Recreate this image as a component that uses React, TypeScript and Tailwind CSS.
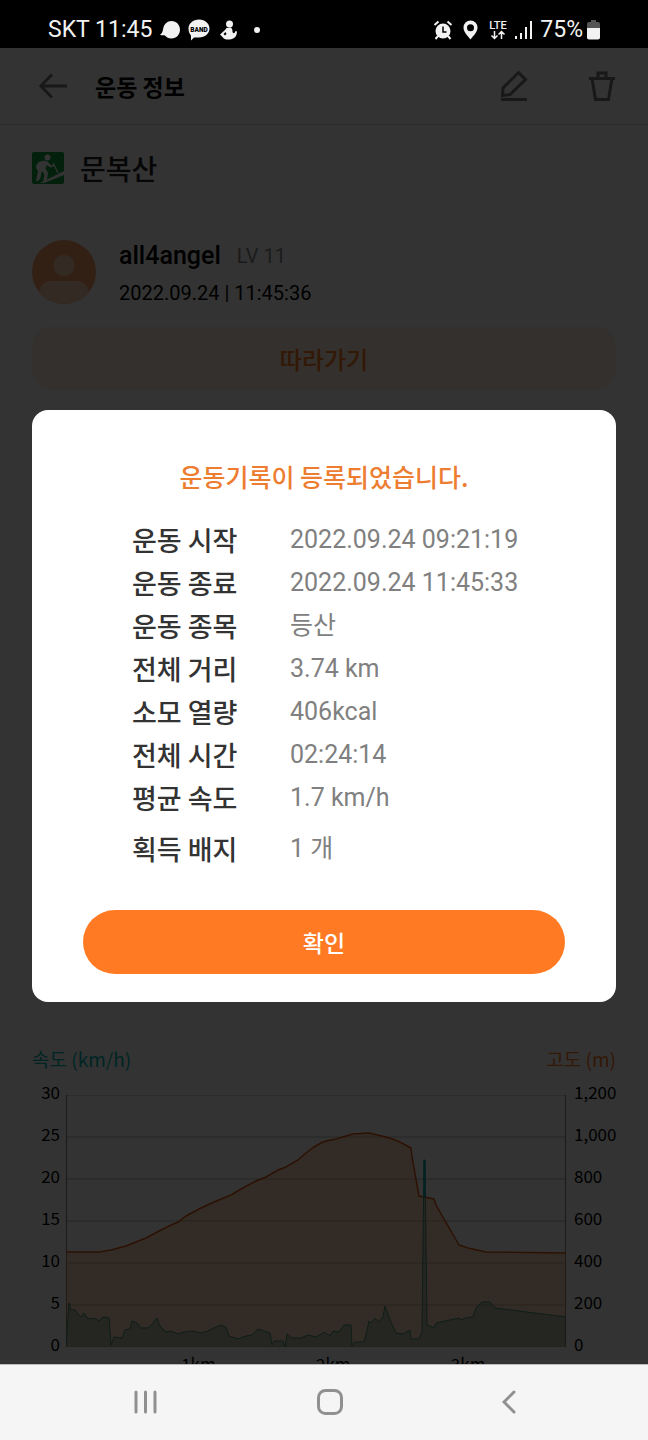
import React from 'react';

type RecordItem = {
  label: string;
  value: string;
};

const records: RecordItem[] = [
  { label: '운동 시작', value: '2022.09.24 09:21:19' },
  { label: '운동 종료', value: '2022.09.24 11:45:33' },
  { label: '운동 종목', value: '등산' },
  { label: '전체 거리', value: '3.74 km' },
  { label: '소모 열량', value: '406kcal' },
  { label: '전체 시간', value: '02:24:14' },
  { label: '평균 속도', value: '1.7 km/h' },
  { label: '획득 배지', value: '1 개' },
];

const speedTicks = ['30', '25', '20', '15', '10', '5', '0'];
const altitudeTicks = ['1,200', '1,000', '800', '600', '400', '200', '0'];
const distanceTicks = ['1km', '2km', '3km'];

const altitudeLine =
  '0,157 33,157 45,155 60,151 80,143 95,135 105,130 112,127 120,121 135,113 148,107 165,100 175,94 190,86 200,82 212,75 220,72 232,65 240,58 248,52 255,48 260,46 270,44 287,39 303,38 320,42 332,46 345,53 346,62 353,101 368,104 370,110 393,150 402,153 420,157 500,158';
const speedLine =
  '0,252 3,208 5,215 9,215 12,219 15,222 18,218 21,223 25,224 29,223 33,226 37,222 43,223 45,250 48,242 56,243 59,235 64,234 66,226 71,228 75,233 82,233 88,227 91,223 94,231 100,237 105,236 112,239 118,237 127,236 135,238 142,236 150,232 155,230 160,232 163,241 172,244 180,241 186,240 192,234 198,236 204,238 206,250 208,246 217,246 219,252 221,239 226,243 235,243 242,240 250,242 259,237 264,241 267,236 273,237 278,230 285,230 286,251 289,247 298,247 300,240 303,226 305,228 309,223 313,227 317,222 319,211 324,225 330,238 337,239 344,235 345,244 353,244 356,237 358,65 359,65 361,230 368,233 370,228 393,223 395,225 399,223 407,222 410,213 416,207 424,207 429,213 500,222';

const BackArrow: React.FC = () => (
  <svg width="28" height="24" viewBox="0 0 28 24" fill="none" stroke="currentColor" strokeWidth="3">
    <path d="M12 1.5 1.8 12 12 22.5M2 12h25" strokeLinecap="round" strokeLinejoin="round" />
  </svg>
);

const StatusBar: React.FC = () => (
  <div className="h-12 shrink-0 bg-black text-[#f2f2f2] flex items-center justify-between px-12 pt-3 font-['Roboto',sans-serif] text-[23px]">
    <div className="flex items-center gap-2">
      <span>SKT 11:45</span>
      <svg width="20" height="18" viewBox="0 0 20 18" fill="currentColor">
        <path d="M11.5 0C16.5 0 20 4 20 8.7S16.5 17.5 11.5 17.5C8 17.5 6 15.5 4.5 14.2 3 14.2 1.5 14.5 0 13.7 2.5 12.3 2.7 10 3.2 7.5 4 3.2 7.2 0 11.5 0Z" />
      </svg>
      <svg width="22" height="22" viewBox="0 0 22 22">
        <path
          d="M11 .5c6 0 10.5 4 10.5 9s-4.5 9-10.5 9c-1.8 0-3.5-.3-5 .1L3 21.5v-5C1.3 14.5.5 12 .5 9.5c0-5 4.5-9 10.5-9Z"
          fill="currentColor"
        />
        <text x="11" y="12.5" textAnchor="middle" fontSize="6.5" fontWeight="900" fontFamily="Roboto" fill="#000">
          BAND
        </text>
      </svg>
      <svg className="ml-0.5" width="18" height="20" viewBox="0 0 18 20" fill="currentColor">
        <circle cx="9.5" cy="4" r="3.5" />
        <path d="M6.5 8 11 7.5c1.5 1.5 1.5 3 1.5 4.5 1 2 2 1.5 3-1l1.5.5c0 4-2 6.5-5 7.5-4 1.2-8 .5-9-1.5L0 14.5 5 10Zm-1 4-2 2 1.5 1.5 1.5-1.5Z" />
      </svg>
      <span className="ml-2 size-1.5 rounded-full bg-current" />
    </div>
    <div className="flex items-center gap-1.5">
      <svg width="20" height="20" viewBox="0 0 20 20">
        <circle cx="10" cy="11" r="7.5" fill="currentColor" />
        <path d="M1.5 5 5.5 1.5M18.5 5l-4-3.5" stroke="currentColor" strokeWidth="2" />
        <path d="m5 16-2.5 3M15 16l2.5 3" stroke="currentColor" strokeWidth="2" />
        <path d="M10 6.5V12h3.5" stroke="#000" strokeWidth="1.5" fill="none" />
      </svg>
      <svg className="mx-1" width="15" height="20" viewBox="0 0 15 20" fill="currentColor" fillRule="evenodd">
        <path d="M7.5.5a7 7 0 0 1 7 7c0 4.5-4 8-7 12-3-4-7-7.5-7-12a7 7 0 0 1 7-7Zm0 3.7a3.5 3.5 0 1 0 0 7 3.5 3.5 0 0 0 0-7Z" />
      </svg>
      <svg width="20" height="22" viewBox="0 0 20 22">
        <text x="10" y="10" textAnchor="middle" fontSize="11" fontWeight="500" fontFamily="Roboto" fill="currentColor">
          LTE
        </text>
        <path d="M6.5 12v7M3.5 16.5l3 3 3-3M13.5 20v-7M10.5 15.5l3-3 3 3" stroke="currentColor" strokeWidth="1.5" fill="none" />
      </svg>
      <svg className="mr-0.5" width="18" height="18" viewBox="0 0 18 18" stroke="currentColor" strokeWidth="2">
        <path d="M2 18v-3M7 18v-6M12 18V6M17 18V0" />
      </svg>
      <div className="flex items-center gap-1">
        <span>75%</span>
        <svg width="13" height="20" viewBox="0 0 13 20">
          <path d="M4 0h5v2h2a2 2 0 0 1 2 2v4H0V4a2 2 0 0 1 2-2h2Z" fill="#555" />
          <path d="M0 8h13v9.5a2 2 0 0 1-2 2H2a2 2 0 0 1-2-2Z" fill="currentColor" />
        </svg>
      </div>
    </div>
  </div>
);

const Header: React.FC = () => (
  <header className="h-[77px] border-b border-gray-300 flex items-center pl-[39px] pr-8 text-[#777]">
    <button type="button" aria-label="뒤로">
      <BackArrow />
    </button>
    <h1 className="ml-7 flex-1 text-[23px] font-bold text-black">운동 정보</h1>
    <button type="button" aria-label="수정">
      <svg width="28" height="32" viewBox="0 0 28 32" fill="none" stroke="currentColor" strokeWidth="3">
        <path d="M2.5 25.5 3 18 18.5 2.5l7 7L10 24.5Z" />
        <path d="M1 29.5h26" />
      </svg>
    </button>
    <button type="button" aria-label="삭제" className="ml-[60px]">
      <svg width="28" height="32" viewBox="0 0 28 32" fill="none" stroke="currentColor" strokeWidth="3">
        <path d="M1 8.5h26M10 8V3h8v5M4 8.5l3.5 21h13L24 8.5" />
      </svg>
    </button>
  </header>
);

const Profile: React.FC = () => (
  <section className="px-8">
    <div className="h-[87px] flex items-center gap-4 border-b border-gray-100">
      <svg width="32" height="32" viewBox="0 0 32 32">
        <rect width="32" height="32" rx="2" fill="#0a9f3c" />
        <g fill="#fff">
          <circle cx="15.5" cy="5.5" r="3" />
          <path d="M8 9.5c3-1 6-1 8 .5l3 3.5 3-1 .5 1.5-4 1.5-4-2.5-1 4 2.5 3.5-1 7-4 2.5 1.5-8-3-3-1 7-2.5 3H4l2-10-2-3c0-3 1.5-5.5 4-6.5Z" />
          <path d="m8 31 24-12v4L12 31Z" />
          <path d="m21 11 5 10" stroke="#fff" strokeWidth="1.2" />
        </g>
      </svg>
      <h2 className="text-[28px] font-medium text-[#222]">문복산</h2>
    </div>
    <div className="mt-[21px] flex items-center gap-[23px]">
      <svg width="64" height="64" viewBox="0 0 64 64">
        <clipPath id="avatar">
          <circle cx="32" cy="32" r="32" />
        </clipPath>
        <g clipPath="url(#avatar)">
          <rect width="64" height="64" fill="#f9a06c" />
          <circle cx="32" cy="25.5" r="10.5" fill="#ffd0b0" />
          <path d="M7 64v-9c0-8 5-14 12-14h26c7 0 12 6 12 14v9Z" fill="#ffd0b0" />
        </g>
      </svg>
      <div className="pt-1 font-['Roboto',sans-serif] text-black">
        <p className="h-[38px] flex items-center gap-4 text-[25px] font-medium">
          all4angel
          <span className="text-[20px] font-normal text-[#888]">LV 11</span>
        </p>
        <p className="h-9 flex items-center text-[20px]">2022.09.24 | 11:45:36</p>
      </div>
    </div>
    <button type="button" className="mt-4 h-[63px] w-full rounded-[20px] bg-[#fff0e2] text-[24px] font-medium text-[#ff7a1e]">
      따라가기
    </button>
  </section>
);

const Chart: React.FC = () => (
  <section className="px-8">
    <div className="flex justify-between text-[19px] leading-6">
      <span className="text-[#00b8b0]">속도 (km/h)</span>
      <span className="text-[#ff7a1e]">고도 (m)</span>
    </div>
    <div className="flex text-[17px] leading-[42px] text-black">
      <ul className="w-7 text-right">
        {speedTicks.map((tick) => (
          <li key={tick}>{tick}</li>
        ))}
      </ul>
      <div className="ml-1.5 mr-2 flex-1 pt-6">
        <svg className="w-full" height="252" viewBox="0 0 500 252" preserveAspectRatio="none">
          {speedTicks.map((tick, i) => (
            <path key={tick} d={`M0 ${i * 42}H500`} stroke="#bbb" />
          ))}
          <path d="M.5 0V252M499.5 0V252" stroke="#888" />
          <polygon points={`0,252 ${altitudeLine} 500,252`} fill="#ff7a1e" fillOpacity="0.3" />
          <polyline points={altitudeLine} fill="none" stroke="#d9580f" strokeWidth="1.5" />
          <polygon points={`${speedLine} 500,252`} fill="#008070" fillOpacity="0.28" />
          <polyline points={speedLine} fill="none" stroke="#3f8f78" />
          <path d="M358.5 65V102" stroke="#00a8b0" strokeWidth="2" />
        </svg>
        <div className="-mt-1 flex pl-[13%]">
          {distanceTicks.map((tick) => (
            <span key={tick} className="w-[31%] text-center">
              {tick}
            </span>
          ))}
        </div>
      </div>
      <ul className="w-[42px]">
        {altitudeTicks.map((tick) => (
          <li key={tick}>{tick}</li>
        ))}
      </ul>
    </div>
  </section>
);

const ResultDialog: React.FC = () => (
  <div className="absolute inset-0 bg-black/80 px-8 flex items-center">
    <div role="dialog" aria-modal="true" aria-labelledby="dialog-title" className="w-full rounded-2xl bg-white px-[51px] pt-[45px] pb-7">
      <h2 id="dialog-title" className="text-center text-[25px] leading-[43px] font-medium text-[#ed7d31]">
        운동기록이 등록되었습니다.
      </h2>
      <dl className="mt-5 pl-[49px] text-[27px] leading-[43px]">
        {records.map(({ label, value }) => (
          <div key={label} className="flex last:mt-2">
            <dt className="w-[158px] font-medium text-[#333]">{label}</dt>
            <dd className="font-['Roboto','Noto_Sans_CJK_KR',sans-serif] text-[25px] text-[#808080]">{value}</dd>
          </div>
        ))}
      </dl>
      <button type="button" className="mt-10 h-16 w-full rounded-full bg-[#ff7a22] text-[23px] font-medium text-white">
        확인
      </button>
    </div>
  </div>
);

const NavigationBar: React.FC = () => (
  <nav className="h-[76px] shrink-0 bg-[#f5f5f5] border-t border-[#bbb] flex items-center justify-between pl-[134px] pr-[132px] pb-0.5 text-[#909090]">
    <button type="button" aria-label="최근 앱">
      <svg width="23" height="24" viewBox="0 0 23 24" stroke="currentColor" strokeWidth="3" strokeLinecap="round">
        <path d="M2 2v20M11.5 2v20M21 2v20" />
      </svg>
    </button>
    <button type="button" aria-label="홈">
      <svg width="26" height="26" viewBox="0 0 26 26" fill="none" stroke="currentColor" strokeWidth="3">
        <rect x="1.5" y="1.5" width="23" height="23" rx="7" />
      </svg>
    </button>
    <button type="button" aria-label="이전">
      <svg width="14" height="24" viewBox="0 0 14 24" fill="none" stroke="currentColor" strokeWidth="3" strokeLinecap="round">
        <path d="M12 2 2 12l10 10" />
      </svg>
    </button>
  </nav>
);

const App: React.FC = () => {
  return (
    <div className="h-screen flex flex-col font-['Noto_Sans_CJK_KR',sans-serif]">
      <StatusBar />
      <div className="relative min-h-0 flex-1 overflow-hidden bg-white flex flex-col justify-between">
        <div>
          <Header />
          <Profile />
        </div>
        <div className="-mb-[21px]">
          <Chart />
        </div>
        <ResultDialog />
      </div>
      <NavigationBar />
    </div>
  );
};

export default App;
